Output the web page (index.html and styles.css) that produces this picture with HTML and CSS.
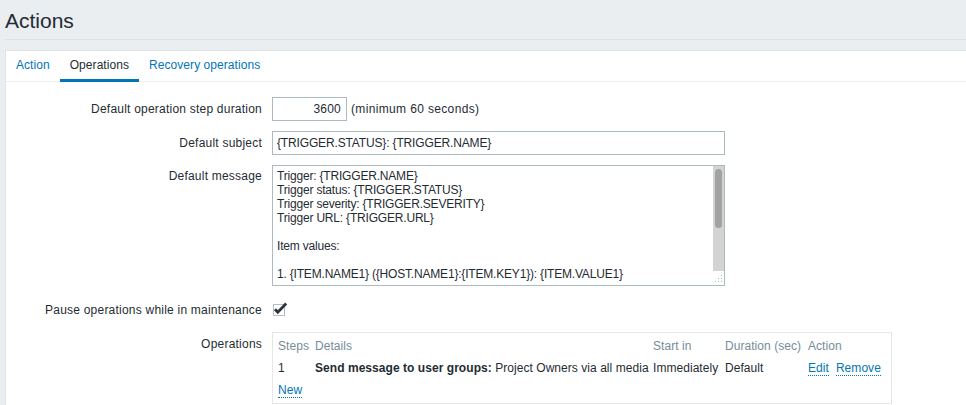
FILE: index.html
```html
<!DOCTYPE html>
<html>
<head>
<meta charset="utf-8">
<title>Actions</title>
<link rel="stylesheet" href="styles.css">
</head>
<body>
<div class="page">
  <header class="title-bar"><h1 class="title">Actions</h1></header>
  <div class="panel">
    <ul class="tabs">
      <li class="tab"><a class="tab-link">Action</a></li>
      <li class="tab active"><a class="tab-link">Operations</a></li>
      <li class="tab"><a class="tab-link">Recovery operations</a></li>
    </ul>
    <div class="form">
      <div class="lbl lbl-mid">Default operation step duration</div>
      <div class="field field-mid"><input class="input input-num" type="text" value="3600"><span class="hint">(minimum 60 seconds)</span></div>

      <div class="lbl lbl-mid">Default subject</div>
      <div class="field field-mid"><input class="input input-wide" type="text" value="{TRIGGER.STATUS}: {TRIGGER.NAME}"></div>

      <div class="lbl lbl-top">Default message</div>
      <div class="field">
        <div class="textarea-wrap">
          <textarea class="textarea" spellcheck="false">Trigger: {TRIGGER.NAME}
Trigger status: {TRIGGER.STATUS}
Trigger severity: {TRIGGER.SEVERITY}
Trigger URL: {TRIGGER.URL}

Item values:

1. {ITEM.NAME1} ({HOST.NAME1}:{ITEM.KEY1}): {ITEM.VALUE1}
2. {ITEM.NAME2} ({HOST.NAME2}:{ITEM.KEY2}): {ITEM.VALUE2}
3. {ITEM.NAME3} ({HOST.NAME3}:{ITEM.KEY3}): {ITEM.VALUE3}

Original event ID: {EVENT.ID}</textarea>
          <div class="scrollbar">
            <div class="sb-track"><div class="sb-thumb"></div></div>
            <svg class="sb-grip" width="11" height="14" viewBox="0 0 11 14">
              <g fill="#b5b5b5">
                <rect x="8" y="4" width="1" height="1"/>
                <rect x="5" y="7" width="1" height="1"/>
                <rect x="8" y="7" width="1" height="1"/>
                <rect x="2" y="10" width="1" height="1"/>
                <rect x="5" y="10" width="1" height="1"/>
                <rect x="8" y="10" width="1" height="1"/>
              </g>
            </svg>
          </div>
        </div>
      </div>

      <div class="lbl lbl-mid">Pause operations while in maintenance</div>
      <div class="field field-mid">
        <svg class="checkbox" width="16" height="15" viewBox="0 0 16 15">
          <rect x="0.5" y="2.5" width="11" height="11" fill="#fff" stroke="#b4bfc5"/>
          <path d="M2 7.2 L4.8 10.2 L13.2 1.6" fill="none" stroke="#2b353b" stroke-width="2.8" stroke-linecap="butt" stroke-linejoin="miter"/>
        </svg>
      </div>

      <div class="lbl lbl-ops">Operations</div>
      <div class="field">
        <div class="ops">
          <div class="ops-grid">
            <div class="th">Steps</div>
            <div class="th">Details</div>
            <div class="th">Start in</div>
            <div class="th">Duration (sec)</div>
            <div class="th">Action</div>

            <div class="td">1</div>
            <div class="td"><b>Send message to user groups:</b> Project Owners via all media</div>
            <div class="td">Immediately</div>
            <div class="td">Default</div>
            <div class="td"><span class="actions"><a class="link">Edit</a><a class="link">Remove</a></span></div>
          </div>
          <div class="ops-new"><a class="link">New</a></div>
        </div>
      </div>
    </div>
  </div>
</div>
</body>
</html>
```

FILE: styles.css
```css
html, body {
  margin: 0;
  padding: 0;
  background: #ebeef1;
}

body {
  font-family: "Liberation Sans", Arial, sans-serif;
  font-size: 12px;
  line-height: 14px;
  color: #1f2c33;
  letter-spacing: 0.22px;
}

.page {
  padding-left: 5px;
  height: 405px;
  overflow: hidden;
}

.title-bar {
  padding: 9px 0 6px;
  border-bottom: 1px solid #dde2e6;
}

.title {
  margin: 0;
  font-size: 21px;
  line-height: 24px;
  font-weight: normal;
  letter-spacing: 0;
  color: #1f2c33;
}

.panel {
  margin-top: 10px;
  background: #fff;
  border-top: 1px solid #dfe4e7;
  border-left: 1px solid #dfe4e7;
  min-height: 400px;
}

.tabs {
  display: flex;
  margin: 0;
  padding: 0;
  list-style: none;
  border-bottom: 1px solid #ebeef1;
  letter-spacing: 0.06px;
}

.tab {
  margin-bottom: -1px;
}

.tab-link {
  display: block;
  padding: 7px 10px;
  border-bottom: 3px solid transparent;
  color: #0275b8;
  cursor: pointer;
}

.tab.active .tab-link {
  color: #1f2c33;
  border-bottom-color: #0275b8;
}

.form {
  display: grid;
  grid-template-columns: 256px 1fr;
  column-gap: 10px;
  row-gap: 10px;
  padding-top: 15px;
}

.lbl {
  text-align: right;
  white-space: nowrap;
}

.lbl-mid {
  align-self: center;
}

.lbl-top {
  align-self: start;
  padding-top: 4px;
}

.lbl-ops {
  align-self: start;
  padding-top: 5px;
}

.field-mid {
  display: flex;
  align-items: center;
  min-height: 24px;
}

.input {
  box-sizing: border-box;
  height: 24px;
  margin: 0;
  padding: 0 4px;
  border: 1px solid #acbbc2;
  background: #fff;
  font-family: "Liberation Sans", Arial, sans-serif;
  font-size: 12px;
  letter-spacing: -0.15px;
  color: #1f2c33;
  outline: none;
}

.input-num {
  width: 75px;
  text-align: right;
  padding-right: 5px;
  letter-spacing: 0.2px;
}

.input-wide {
  width: 453px;
}

.hint {
  margin-left: 4px;
  letter-spacing: 0.35px;
}

.textarea-wrap {
  display: flex;
  box-sizing: border-box;
  width: 453px;
  height: 121px;
  margin-bottom: 2px;
  border: 1px solid #acbbc2;
  background: #fff;
}

.textarea {
  flex: 1;
  display: block;
  box-sizing: border-box;
  height: 115px;
  margin: 0;
  padding: 3px 4px 0;
  border: 0;
  background: transparent;
  font-family: "Liberation Sans", Arial, sans-serif;
  font-size: 12px;
  line-height: 14px;
  letter-spacing: -0.19px;
  color: #1f2c33;
  resize: none;
  overflow: hidden;
  outline: none;
  white-space: pre;
}

.scrollbar {
  display: flex;
  flex-direction: column;
  width: 11px;
}

.sb-track {
  flex: 1;
  background: #d3d3d3;
  padding: 3px 2px 0;
}

.sb-thumb {
  height: 59px;
  background: #a2a2a2;
  border-radius: 4px;
}

.sb-grip {
  display: block;
}

.checkbox {
  display: block;
  margin-left: 1px;
  margin-top: -2px;
}

.ops {
  box-sizing: border-box;
  width: 620px;
  border: 1px solid #e3e7ea;
  padding: 2px 5px;
  letter-spacing: 0.05px;
}

.ops-grid {
  display: grid;
  grid-template-columns: 37px 338px 72px 83px auto;
}

.th {
  padding: 4px 0;
  color: #768d99;
  white-space: nowrap;
}

.td {
  padding: 4px 0;
  white-space: nowrap;
}

.actions {
  display: inline-flex;
  gap: 7px;
}

.ops-new {
  padding: 3px 0 4px;
}

.link {
  color: #0275b8;
  text-decoration: none;
  border-bottom: 1px dotted #0275b8;
  cursor: pointer;
}
```
